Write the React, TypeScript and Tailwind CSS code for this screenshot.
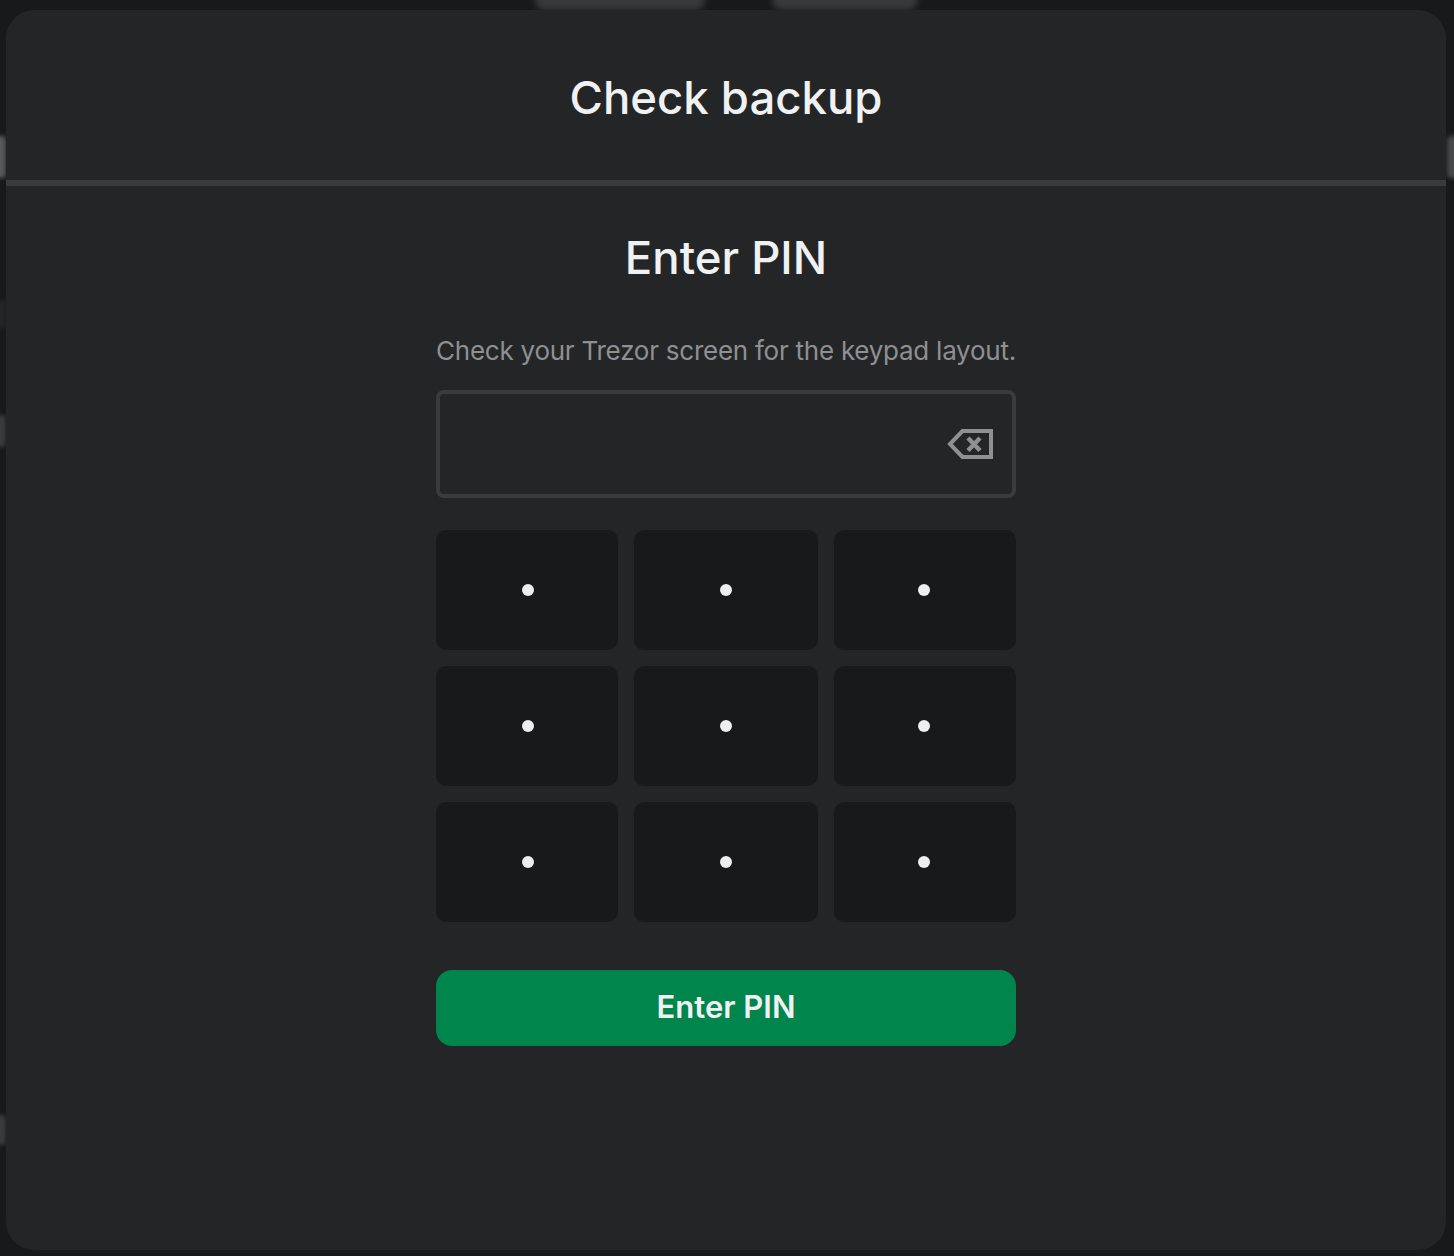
const dots = [1, 2, 3, 4, 5, 6, 7, 8, 9];

export default function App() {
  return (
    <div className="relative h-[1256px] w-[1454px] overflow-hidden bg-[#18191b] px-[6px] pt-[10px] pb-[6px] font-['Inter',sans-serif]">
      {/* blurred page showing behind the modal edges */}
      <div className="absolute top-[-10px] left-[535px] h-[20px] w-[170px] rounded-full bg-[#38393b] blur-[3px]" />
      <div className="absolute top-[-10px] left-[772px] h-[20px] w-[146px] rounded-full bg-[#38393b] blur-[3px]" />
      <div className="absolute top-[136px] left-[-6px] h-[42px] w-[12px] rounded-[4px] bg-[#58595b] blur-[2px]" />
      <div className="absolute top-[415px] left-[-6px] h-[32px] w-[12px] rounded-[4px] bg-[#3a3b3d] blur-[2px]" />
      <div className="absolute top-[300px] left-[-6px] h-[28px] w-[12px] bg-[#242527] blur-[2px]" />
      <div className="absolute top-[136px] right-[-6px] h-[42px] w-[13px] rounded-[4px] bg-[#48494b] blur-[2px]" />
      <div className="absolute top-[1115px] left-[-6px] h-[30px] w-[12px] rounded-[4px] bg-[#3a3b3d] blur-[2px]" />

      <div className="relative flex h-[1240px] w-[1440px] flex-col rounded-[28px] bg-[#242527]">
        <header className="flex h-[176px] shrink-0 items-center justify-center border-b-[6px] border-[#3a3b3d] pt-[6px]">
          <h1 className="text-[45.5px] leading-[60px] font-medium text-[#f0f1f2]">Check backup</h1>
        </header>

        <main className="flex flex-col items-center">
          <h2 className="mt-[42px] text-[45.5px] leading-[60px] font-medium text-[#f0f1f2]">Enter PIN</h2>
          <p className="mt-[45px] h-[36px] text-[26px] leading-[36px] tracking-[-0.25px] text-[#8e9092]">
            Check your Trezor screen for the keypad layout.
          </p>

          <div className="mt-[21px] flex h-[108px] w-[580px] items-center justify-end rounded-[8px] border-[4px] border-[#3a3b3d] pr-[18px]">
            <svg width="47" height="32" viewBox="0 0 47 32" fill="none" stroke="#8e9092" strokeWidth="4" strokeLinejoin="miter">
              <path d="M44 3H15.5L3 16l12.5 13H44z" />
              <path d="M21 10l12 12.5M33 10L21 22.5" strokeWidth="4.5" />
            </svg>
          </div>

          <div className="mt-[32px] grid w-[580px] grid-cols-[182px_184px_182px] gap-4">
            {dots.map((d) => (
              <button
                key={d}
                className={`flex h-[120px] items-center justify-center rounded-[10px] bg-[#18191b] ${
                  d % 3 === 1 ? "pl-[2px]" : d % 3 === 0 ? "pr-[2px]" : ""
                }`}
              >
                <span className="block h-[12px] w-[12px] rounded-full bg-[#eceef0]" />
              </button>
            ))}
          </div>

          <button className="mt-[48px] flex h-[76px] w-[580px] items-center justify-center rounded-[16px] bg-[#00854d] pb-[2px] text-[31px] font-semibold text-[#f0f1f2]">
            Enter PIN
          </button>
        </main>
      </div>
    </div>
  );
}
